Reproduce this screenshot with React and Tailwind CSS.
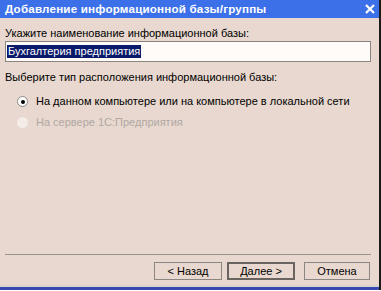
export default function App() {
  return (
    <div className="w-[381px] h-[291px] bg-white flex flex-col overflow-hidden font-['Liberation_Sans',sans-serif]">
      <div className="flex-1 flex flex-col border-r-2 border-r-[#1a1a1a]">
        {/* title bar */}
        <div className="h-[18px] bg-[#3c70e8] flex items-center justify-between pl-[5px] pr-[4px]">
          <span className="text-white font-bold text-[11.6px] leading-none tracking-[0.2px]">
            Добавление информационной базы/группы
          </span>
          <svg width="10" height="10" viewBox="0 0 10 10">
            <path d="M1 1 L9 9 M9 1 L1 9" stroke="white" strokeWidth="2.2" />
          </svg>
        </div>

        {/* body */}
        <div className="flex-1 bg-[#e8d8cf] flex flex-col px-[5px] text-[11px] text-black whitespace-nowrap">
          <div className="mt-[9px] leading-[13px]">Укажите наименование информационной базы:</div>
          <div className="mt-[1px] h-[21px] border border-[#8a8580] bg-[#fffbf8] flex items-center pl-[1px] mr-[3px]">
            <span className="bg-[#0a1a6a] text-white leading-[13px] px-[1px]">Бухгалтерия предприятия</span>
          </div>

          <div className="mt-[9px] leading-[13px]">Выберите тип расположения информационной базы:</div>

          <div className="mt-[11px] flex items-center gap-[8px] pl-[12px] leading-[13px]">
            <span className="w-[11px] h-[11px] rounded-full border border-[#8c8a88] bg-white flex items-center justify-center">
              <span className="w-[4px] h-[4px] rounded-full bg-black" />
            </span>
            <span>На данном компьютере или на компьютере в локальной сети</span>
          </div>
          <div className="mt-[8px] flex items-center gap-[8px] pl-[12px] leading-[13px] text-[#b0a8a4]">
            <span className="w-[11px] h-[11px] rounded-full bg-[#f4ece8]" />
            <span>На сервере 1С:Предприятия</span>
          </div>

          <div className="flex-1" />

          <div className="border-t border-[#9a928c] mr-[3px]" />
          <div className="flex justify-end mt-[7px] mb-[5px] mr-[4px]">
            <button className="w-[68px] h-[18px] border border-[#8c8682] bg-[#e8d8cf] text-[11px] leading-none flex items-center justify-center">
              &lt; Назад
            </button>
            <button className="ml-[5px] w-[68px] h-[18px] border-2 border-[#6a6460] bg-[#e8d8cf] text-[11px] leading-none flex items-center justify-center">
              Далее &gt;
            </button>
            <button className="ml-[9px] w-[66px] h-[18px] border border-[#8c8682] bg-[#e8d8cf] text-[11px] leading-none flex items-center justify-center">
              Отмена
            </button>
          </div>
        </div>
        <div className="h-[2px] bg-[#d8d4d0]" />
        <div className="h-[3px] bg-[#3a48b0]" />
      </div>
      <div className="h-[1px] bg-white" />
    </div>
  );
}
